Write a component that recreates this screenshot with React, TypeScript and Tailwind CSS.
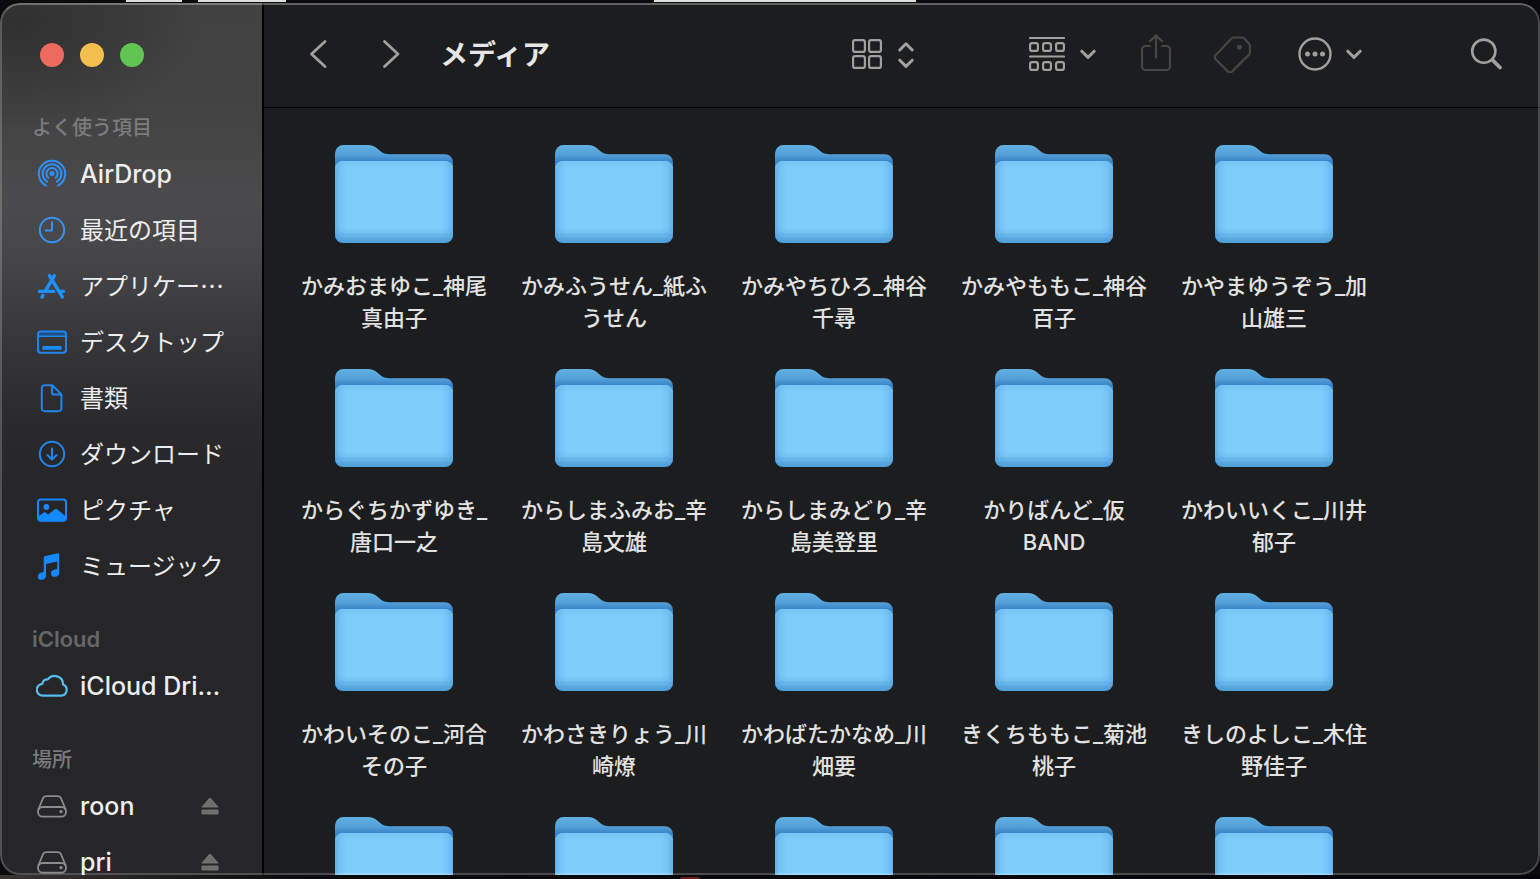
import type { ReactNode } from 'react';

interface SidebarItem {
  label: string;
  icon: ReactNode;
  ejectable?: boolean;
  latin?: boolean;
}

interface SidebarSection {
  title: string;
  latin?: boolean;
  items: SidebarItem[];
}

const AirDropIcon = () => (
  <svg width="32" height="32" viewBox="0 0 32 32" fill="none" stroke="#2f8ff5" strokeWidth="2" strokeLinecap="round">
    <path d="M10 27.6a13.2 13.2 0 1 1 12 0" />
    <path d="M11 23.6a9.4 9.4 0 1 1 10 0" />
    <path d="M12.300 19.800a5.600 5.600 0 1 1 7.400 0" />
    <circle cx="16" cy="15.600" r="2.500" fill="#2f8ff5" stroke="none" />
  </svg>
);

const ClockIcon = () => (
  <svg width="32" height="32" viewBox="0 0 32 32" fill="none" stroke="#3393f7" strokeWidth="2" strokeLinecap="round" strokeLinejoin="round">
    <circle cx="16" cy="16" r="12.200" />
    <path d="M16 8.200v8.200H9.600" />
  </svg>
);

const AppsIcon = () => (
  <svg width="32" height="32" viewBox="0 0 32 32" fill="none" stroke="#1e90ff" strokeWidth="3.400" strokeLinecap="round">
    <path d="M13.400 5.600 26.400 27" />
    <path d="M18.400 5.600 9.600 20.600" />
    <path d="M3.600 21.400H17.600" />
    <path d="M23.400 21.400H27.400" />
    <path d="M7 25.400 6 27" />
  </svg>
);

const DesktopIcon = () => (
  <svg width="32" height="32" viewBox="0 0 32 32" fill="none">
    <path d="M3 7.800h26" stroke="#1b4f8a" strokeWidth="3" />
    <rect x="2" y="5.400" width="28" height="21.400" rx="2.800" stroke="#1f86f0" strokeWidth="2" />
    <path d="M2 10.200h28" stroke="#1f86f0" strokeWidth="1.600" />
    <rect x="6.400" y="20" width="19.200" height="3.800" rx="0.800" fill="#158cff" />
  </svg>
);

const DocumentIcon = () => (
  <svg width="32" height="32" viewBox="0 0 32 32" fill="none" stroke="#1f86f0" strokeWidth="2" strokeLinejoin="round">
    <path d="M8.600 3.200h7.600l9.200 9.200v14a2.800 2.800 0 0 1-2.800 2.800h-14a2.800 2.800 0 0 1-2.800-2.800V6a2.800 2.800 0 0 1 2.800-2.800z" />
    <path d="M16 3.400v7.400a1.800 1.800 0 0 0 1.800 1.800h7.400" />
  </svg>
);

const DownloadIcon = () => (
  <svg width="32" height="32" viewBox="0 0 32 32" fill="none" stroke="#1f86f0" strokeWidth="2" strokeLinecap="round" strokeLinejoin="round">
    <circle cx="16" cy="16" r="12.200" />
    <path d="M16 10.400v11M11.400 17l4.600 4.600 4.600-4.600" />
  </svg>
);

const PictureIcon = () => (
  <svg width="32" height="32" viewBox="0 0 32 32" fill="none">
    <rect x="2" y="5.400" width="28" height="21.400" rx="2.800" stroke="#1388ff" strokeWidth="2" />
    <circle cx="10.400" cy="13" r="2.900" fill="#1388ff" />
    <path d="M2.400 22.600 7.600 18.600q1-.7 2 0l2.600 2 6.400-5.200q1.400-1.100 2.800 0l8.200 6.800v4.600H2.400z" fill="#1388ff" />
  </svg>
);

const MusicIcon = () => (
  <svg width="32" height="32" viewBox="1 0 32 32" fill="#1388ff">
    <path d="M9.400 6.200 22.800 3.200q1.400-.3 1.400 1.200v18.200a4.200 3.800 0 0 1-4.400 4.200 3.600 3.600 0 0 1-3.800-3.400c0-2.600 2.400-3.700 4.600-3.900 1-.1 1.600-.4 1.600-1.400V11.600L11 14v11.600a4.200 3.800 0 0 1-4.400 4.200 3.600 3.600 0 0 1-3.800-3.400c0-2.600 2.400-3.700 4.400-3.900 1-.1 1.600-.4 1.600-1.400V7.400q0-1 .6-1.200z" />
  </svg>
);

const CloudIcon = () => (
  <svg width="32" height="32" viewBox="0 0 32 32" fill="none" stroke="#55bdf0" strokeWidth="2.200" strokeLinejoin="round">
    <path d="M7 25.600a5.900 5.900 0 0 1-.6-11.800 4.600 4.600 0 0 1 5.400-4.400 8.400 8.400 0 0 1 15.200 5.200 5.700 5.700 0 0 1-1.800 11z" />
  </svg>
);

const DriveIcon = () => (
  <svg width="32" height="32" viewBox="0 0 32 32" fill="none" stroke="#8b8b8c" strokeWidth="1.800" strokeLinejoin="round">
    <path d="M2.200 20 6.800 8.600q1-2.400 3.600-2.400h11.200q2.600 0 3.600 2.400L29.800 20" />
    <rect x="2" y="17" width="28" height="9.600" rx="4.600" />
    <circle cx="25" cy="21.600" r="1.700" fill="#8b8b8c" stroke="none" />
  </svg>
);

const EjectIcon = () => (
  <svg width="18" height="18" viewBox="0 0 18 18" fill="#6f6f70">
    <path d="M8 1.200q1-1.100 2 0l7.200 8.200q.9 1.200-.6 1.200H1.400q-1.500 0-.6-1.200z" />
    <rect x="0.400" y="12.600" width="17.200" height="4.800" rx="0.800" />
  </svg>
);

const sections: SidebarSection[] = [
  {
    title: 'よく使う項目',
    items: [
      { label: 'AirDrop', icon: <AirDropIcon />, latin: true },
      { label: '最近の項目', icon: <ClockIcon /> },
      { label: 'アプリケー…', icon: <AppsIcon /> },
      { label: 'デスクトップ', icon: <DesktopIcon /> },
      { label: '書類', icon: <DocumentIcon /> },
      { label: 'ダウンロード', icon: <DownloadIcon /> },
      { label: 'ピクチャ', icon: <PictureIcon /> },
      { label: 'ミュージック', icon: <MusicIcon /> },
    ],
  },
  {
    title: 'iCloud',
    latin: true,
    items: [{ label: 'iCloud Dri…', icon: <CloudIcon />, latin: true }],
  },
  {
    title: '場所',
    items: [
      { label: 'roon', icon: <DriveIcon />, latin: true, ejectable: true },
      { label: 'pri', icon: <DriveIcon />, latin: true, ejectable: true },
    ],
  },
];

const folders = [
  'かみおまゆこ_神尾真由子',
  'かみふうせん_紙ふうせん',
  'かみやちひろ_神谷千尋',
  'かみやももこ_神谷百子',
  'かやまゆうぞう_加山雄三',
  'からぐちかずゆき_唐口一之',
  'からしまふみお_辛島文雄',
  'からしまみどり_辛島美登里',
  'かりばんど_仮BAND',
  'かわいいくこ_川井郁子',
  'かわいそのこ_河合その子',
  'かわさきりょう_川崎燎',
  'かわばたかなめ_川畑要',
  'きくちももこ_菊池桃子',
  'きしのよしこ_木住野佳子',
];

// Shared by every folder drawing
const FolderGradients = () => (
  <svg width="0" height="0" className="absolute" aria-hidden="true">
    <defs>
      <linearGradient id="folder-back" x1="0" y1="0" x2="0" y2="24" gradientUnits="userSpaceOnUse">
        <stop offset="0" stopColor="#62b0e2" />
        <stop offset="0.4" stopColor="#539fd9" />
        <stop offset="0.7" stopColor="#3783c6" />
        <stop offset="1" stopColor="#3783c6" />
      </linearGradient>
      <linearGradient id="folder-front" x1="0" y1="16" x2="0" y2="98" gradientUnits="userSpaceOnUse">
        <stop offset="0" stopColor="#74c4f5" />
        <stop offset="0.1" stopColor="#7fcdfb" />
        <stop offset="0.8" stopColor="#7fcdfb" />
        <stop offset="0.88" stopColor="#75c3f3" />
        <stop offset="0.89" stopColor="#66b4e8" />
        <stop offset="0.93" stopColor="#66b4e8" />
        <stop offset="0.94" stopColor="#5aa9e0" />
        <stop offset="1" stopColor="#4f9fd8" />
      </linearGradient>
      <linearGradient id="folder-sides" x1="0" y1="0" x2="118" y2="0" gradientUnits="userSpaceOnUse">
        <stop offset="0" stopColor="#4a9ad8" stopOpacity="0.6" />
        <stop offset="0.04" stopColor="#4a9ad8" stopOpacity="0.2" />
        <stop offset="0.1" stopColor="#4a9ad8" stopOpacity="0" />
        <stop offset="0.9" stopColor="#4a9ad8" stopOpacity="0" />
        <stop offset="0.96" stopColor="#4a9ad8" stopOpacity="0.2" />
        <stop offset="1" stopColor="#4a9ad8" stopOpacity="0.6" />
      </linearGradient>
    </defs>
  </svg>
);

const FolderIcon = () => (
  <svg width="118" height="98" viewBox="0 0 118 98" className="shrink-0">
    <path
      d="M0 8.500A8.500 8.500 0 0 1 8.500 0H33c4 0 6.500 1.200 9.500 3.800C47 7.600 49 9.200 54 9.200H110a8 8 0 0 1 8 8V60H0z"
      fill="url(#folder-back)"
    />
    <rect x="0" y="16" width="118" height="82" rx="8" fill="url(#folder-front)" />
    <rect x="0" y="16" width="118" height="82" rx="8" fill="url(#folder-sides)" />
    <path d="M1 23.500a7 7 0 0 1 7-7H110a7 7 0 0 1 7 7" fill="none" stroke="#7cc9f6" strokeWidth="0.800" />
  </svg>
);

const SmallChevron = () => (
  <svg width="16" height="12" viewBox="0 0 16 12" fill="none" stroke="#a0a0a1" strokeWidth="3" strokeLinecap="round" strokeLinejoin="round">
    <path d="M1.800 3.200 8 9.400l6.200-6.200" />
  </svg>
);

function Sidebar() {
  return (
    <aside className="w-[264px] shrink-0 overflow-hidden border-r-2 border-black bg-[radial-gradient(ellipse_180px_110px_at_20px_20px,rgba(36,36,37,0.6),transparent),linear-gradient(to_bottom,#414142_0px,#434344_110px,#4b4b4d_200px,#454547_260px,#363638_340px,#2a2a2c_420px,#262628_500px,#262628_100%)]">
      <div className="flex h-[105px] items-center gap-4 pb-px pl-10">
        <button aria-label="閉じる" className="size-6 rounded-full bg-[#ed6a5e]" />
        <button aria-label="しまう" className="size-6 rounded-full bg-[#f5bf4f]" />
        <button aria-label="拡大" className="size-6 rounded-full bg-[#61c554]" />
      </div>
      <nav className="flex flex-col gap-[26px]">
        {sections.map((section) => (
          <section key={section.title}>
            <h2
              className={`flex h-[38px] items-center pl-8 ${
                section.latin ? 'text-[22px] font-semibold text-[#666667]' : 'pt-0.5 text-[20px] font-medium text-[#7c7c7d]'
              }`}
            >
              {section.title}
            </h2>
            <ul>
              {section.items.map((item) => (
                <li key={item.label} className="flex h-14 items-center pr-[43px] pl-9">
                  <a href="#" className="flex min-w-0 flex-1 items-center gap-3 text-[#ededed]">
                    <span className="shrink-0">{item.icon}</span>
                    <span
                      className={`whitespace-nowrap leading-8 ${
                        item.latin ? 'text-[25px] font-medium' : "pb-0.5 font-['Noto_Sans_CJK_JP',sans-serif] text-[24px]"
                      }`}
                    >
                      {item.label}
                    </span>
                  </a>
                  {item.ejectable && (
                    <button aria-label={`${item.label}を取り出す`}>
                      <EjectIcon />
                    </button>
                  )}
                </li>
              ))}
            </ul>
          </section>
        ))}
      </nav>
    </aside>
  );
}

function Toolbar() {
  return (
    <header className="flex h-[105px] shrink-0 items-center border-b border-black pr-[37px] pb-0.5 pl-[38px]">
      <div className="flex items-center gap-[41px]">
        <button aria-label="戻る">
          <svg width="32" height="32" viewBox="0 0 32 32" fill="none" stroke="#a0a0a1" strokeWidth="2.800" strokeLinecap="round" strokeLinejoin="round">
            <path d="M23 3.500 9.500 16 23 28.500" />
          </svg>
        </button>
        <button aria-label="進む">
          <svg width="32" height="32" viewBox="0 0 32 32" fill="none" stroke="#a0a0a1" strokeWidth="2.800" strokeLinecap="round" strokeLinejoin="round">
            <path d="M9.500 3.500 23 16 9.500 28.500" />
          </svg>
        </button>
      </div>
      <h1 className="ml-[33px] pt-0.5 text-[28px] leading-9 font-bold text-[#e6e6e6]">メディア</h1>

      <div className="ml-auto flex items-center">
        <button aria-label="表示方法" className="flex items-center gap-4">
          <svg width="30" height="30" viewBox="0 0 30 30" fill="none" stroke="#a0a0a1" strokeWidth="2.200">
            <rect x="1.100" y="1.100" width="11.800" height="11.800" rx="2" />
            <rect x="17.100" y="1.100" width="11.800" height="11.800" rx="2" />
            <rect x="1.100" y="17.100" width="11.800" height="11.800" rx="2" />
            <rect x="17.100" y="17.100" width="11.800" height="11.800" rx="2" />
          </svg>
          <svg width="16" height="28" viewBox="0 0 16 28" fill="none" stroke="#a0a0a1" strokeWidth="3" strokeLinecap="round" strokeLinejoin="round">
            <path d="M1.800 10 8 3.800l6.200 6.200M1.800 20.200 8 26.400l6.200-6.200" />
          </svg>
        </button>
        <button aria-label="グループ" className="ml-[115px] flex items-center gap-[15px]">
          <svg width="36" height="36" viewBox="0 0 36 36" fill="none" stroke="#a0a0a1" strokeWidth="2.200">
            <path d="M1 2H35M1 20.500H35" strokeLinecap="round" />
            <rect x="1.100" y="7.100" width="7.800" height="7.800" rx="2" />
            <rect x="14.100" y="7.100" width="7.800" height="7.800" rx="2" />
            <rect x="27.100" y="7.100" width="7.800" height="7.800" rx="2" />
            <rect x="1.100" y="26.100" width="7.800" height="7.800" rx="2" />
            <rect x="14.100" y="26.100" width="7.800" height="7.800" rx="2" />
            <rect x="27.100" y="26.100" width="7.800" height="7.800" rx="2" />
          </svg>
          <SmallChevron />
        </button>
        <button aria-label="共有" disabled className="ml-[45px]">
          <svg width="30" height="40" viewBox="0 0 30 40" fill="none" stroke="#464647" strokeWidth="2.200" strokeLinecap="round" strokeLinejoin="round">
            <path d="M9 12H4.500A3.500 3.500 0 0 0 1 15.500v17A3.500 3.500 0 0 0 4.500 36h21a3.500 3.500 0 0 0 3.500-3.500v-17a3.500 3.500 0 0 0-3.500-3.500H21" />
            <path d="M15 23.500V1.500M9 7.200 15 1.400 21 7.200" />
          </svg>
        </button>
        <button aria-label="タグ" disabled className="ml-[42px]">
          <svg width="38" height="38" viewBox="0 0 38 38" fill="none" stroke="#464647" strokeWidth="2.200" strokeLinejoin="round">
            <path d="M21 2.500h8q1.600 0 2.600 1.100l4.400 5.200q.9 1 .9 2.400v6q0 1.600-1.100 2.700L19 36.600q-2 1.700-3.900 0L2.600 24.200q-1.700-1.900 0-3.900L18.400 3.600q1-1.100 2.600-1.100z" />
            <circle cx="26.500" cy="12.300" r="2.500" fill="#464647" stroke="none" />
          </svg>
        </button>
        <button aria-label="その他" className="ml-[47px] flex items-center gap-[14px]">
          <svg width="34" height="34" viewBox="0 0 34 34" fill="none" stroke="#a0a0a1" strokeWidth="2.400">
            <circle cx="17" cy="17" r="15.500" />
            <g fill="#a0a0a1" stroke="none">
              <circle cx="9.500" cy="17" r="2.500" />
              <circle cx="17" cy="17" r="2.500" />
              <circle cx="24.500" cy="17" r="2.500" />
            </g>
          </svg>
          <SmallChevron />
        </button>
        <button aria-label="検索" className="ml-[108px]">
          <svg width="33" height="32" viewBox="0 0 33 32" fill="none" stroke="#a0a0a1" strokeLinecap="round">
            <circle cx="13.800" cy="13.200" r="11.600" strokeWidth="2.600" />
            <path d="M22.500 22 30 29.500" strokeWidth="3.800" />
          </svg>
        </button>
      </div>
    </header>
  );
}

function FolderGrid() {
  // The last row is cut off by the bottom of the window
  const partial = ['folder-16', 'folder-17', 'folder-18', 'folder-19', 'folder-20'];

  return (
    <main className="min-h-0 flex-1 overflow-hidden pt-[37px] pl-5">
      <ul className="grid grid-cols-[repeat(auto-fill,220px)] gap-y-[35px]">
        {folders.map((name) => (
          <li key={name} className="flex flex-col items-center gap-[27px]">
            <FolderIcon />
            <p className="min-h-16 w-[200px] text-center text-[22px] leading-8 font-medium text-[#e2e2e2]">{name}</p>
          </li>
        ))}
        {partial.map((key) => (
          <li key={key} className="flex flex-col items-center">
            <FolderIcon />
          </li>
        ))}
      </ul>
    </main>
  );
}

export default function App() {
  return (
    <div
      lang="ja"
      className="flex h-screen flex-col overflow-hidden bg-[#0b0b0d] font-['Inter','Noto_Sans_CJK_JP',sans-serif]"
    >
      <FolderGradients />
      <div className="flex h-[3px] shrink-0 items-start pl-[126px]">
        <div className="h-0.5 w-14 bg-[#dcdddd]" />
        <div className="ml-4 h-0.5 w-[88px] bg-[#dcdddd]" />
        <div className="ml-[368px] h-0.5 w-[262px] bg-[#dcdddd]" />
      </div>
      <div className="relative flex min-h-0 flex-1 overflow-hidden rounded-[20px] bg-[#1c1d1e]">
        <Sidebar />
        <div className="flex min-w-0 flex-1 flex-col">
          <Toolbar />
          <FolderGrid />
        </div>
        <div className="pointer-events-none absolute inset-0 rounded-[20px] border-2 border-white/20 border-t-white/30" />
      </div>
      <div className="flex h-1 shrink-0 items-end bg-gradient-to-r from-[#3a3533] from-0% via-[#0b0b0d] via-20% to-[#05060e] pl-[680px]">
        <div className="h-0.5 w-5 rounded-t-full bg-[#6e1c1a]" />
      </div>
    </div>
  );
}
